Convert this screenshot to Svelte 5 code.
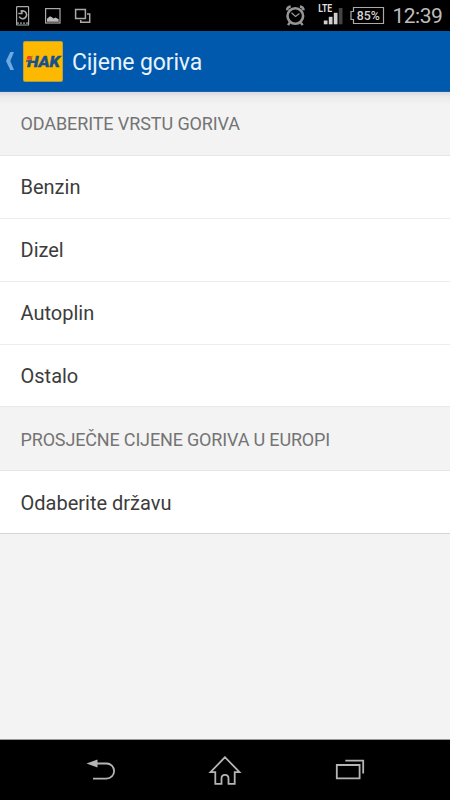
<script>
  const fuels = ['Benzin', 'Dizel', 'Autoplin', 'Ostalo'];
</script>

<div class="screen">
  <div class="status">
    <svg class="notifications" width="100" height="31" viewBox="0 0 100 31" fill="none" stroke="#aaa" stroke-width="1.2">
      <rect x="16.6" y="6.6" width="12" height="18.4" rx="0.6" />
      <path d="M17 23.2h11" stroke="#6c7880" stroke-width="1.8" stroke-dasharray="2 1" />
      <path d="M20.600 11.500A3.900 3.900 0 1 1 19.200 16.500" stroke-width="1.600" />
      <path d="M18.300 13.600h3.600V10" stroke-width="1.500" />
      <rect x="45.6" y="8.6" width="14.4" height="14.4" />
      <path d="M47 21.800v-3l3-2.500 2 1 1.500 1.200 2-1 3.200 1.800v2.500z" fill="#bbb" stroke="none" />
      <path d="M75.600 9.600h9.800v9h-9.800z" stroke-width="1.500" />
      <path d="M87 14.100h2.700v8.200h-9v-2.300" stroke-width="1.500" />
    </svg>
    <svg class="system" width="120" height="31" viewBox="280 0 120 31">
      <g fill="none" stroke="#969696">
        <circle cx="295.3" cy="16" r="7.800" stroke-width="2.600" />
        <path d="M287 10.300q.2-3.400 3.700-3.800M303.600 10.300q-.2-3.400-3.700-3.800M289.700 22.600l-1.700 2.500M300.900 22.600l1.700 2.500" stroke-width="2.400" />
        <path d="M291.500 12.700l4 3.800 4-3" stroke-width="1.300" />
      </g>
      <g fill="#d0d0d0">
        <rect x="323.800" y="20.500" width="3.700" height="3.800" />
        <rect x="328.800" y="16.800" width="3.700" height="7.500" />
        <rect x="333.800" y="12.800" width="3.700" height="11.500" />
        <rect x="338.800" y="8" width="3.700" height="16.300" fill="#444" />
      </g>
      <text x="318.2" y="12" class="lte" textLength="14" lengthAdjust="spacingAndGlyphs">LTE</text>
      <path d="M353.500 7.500h30v16h-30v-4h-2.500v-8h2.500z" fill="none" stroke="#aaa" stroke-width="1.200" />
      <text x="356.800" y="20.300" class="percent" textLength="23" lengthAdjust="spacingAndGlyphs">85%</text>
    </svg>
    <span class="clock">12:39</span>
  </div>

  <header>
    <svg class="chevron" width="10" height="20" viewBox="0 0 10 20"><path d="M5.300 1h3.700L5.300 10 9 19H5.300L1 10z" fill="#6ea9df" /></svg>
    <svg class="logo" width="40" height="41" viewBox="0 0 40 41">
      <rect width="40" height="41" rx="2" fill="#a99a45" />
      <rect x=".7" y=".7" width="38.600" height="39.200" rx="1.500" fill="#fdb900" />
      <text x="4" y="25.600" textLength="33" lengthAdjust="spacingAndGlyphs">HAK</text>
      <path d="M3 13.500h6.400l-1.500 5.300H2z" fill="#fdb900" />
      <path d="M4.600 15h4.200l-1.100 3.400H3.400z" fill="#ef3e24" />
      <path d="M3.300 19.200H9l-.4 1.500H2.700z" fill="#3d5870" />
      <path d="M1.700 21.700h3l-1.300 4.500H1z" fill="#fdb900" />
    </svg>
    <h1>Cijene goriva</h1>
  </header>

  <main>
    <h2 class="first"><span>ODABERITE VRSTU GORIVA</span></h2>
    <ul>
      {#each fuels as fuel}
        <li>{fuel}</li>
      {/each}
    </ul>
    <h2 class="europe"><span>PROSJEČNE CIJENE GORIVA U EUROPI</span></h2>
    <ul class="last"><li>Odaberite državu</li></ul>
  </main>

  <nav>
    <svg width="450" height="60" viewBox="0 0 450 60" fill="none" stroke="#b5b5b5" stroke-width="1.800">
      <path d="M96 23.500h10.500a7.600 7.600 0 0 1 0 15.200H93" />
      <path d="M86.500 23.500l11-4v8z" fill="#b5b5b5" stroke="none" />
      <path d="M225 17.200l-14.500 15h4.800v11.600h6.200v-5.300q0-3.600 3.500-3.600t3.500 3.600v5.300h6.200V32.200h4.800z" />
      <path d="M336.800 25h22.800v13.400h-22.800zM345.300 20.600h17.900v13" />
    </svg>
  </nav>
</div>

<style>
  :global(body) { background: #000; }
  .screen {
    width: 450px;
    height: 800px;
    display: flex;
    flex-direction: column;
    overflow: hidden;
    background: #f3f3f3;
    font-family: Roboto, sans-serif;
  }
  .status {
    height: 31px;
    flex: none;
    display: flex;
    background: #000;
  }
  .system { margin-left: 180px; }
  .lte { font: 700 10px Roboto, sans-serif; fill: #ddd; }
  .percent { font: 500 12.500px Roboto, sans-serif; fill: #d5d5d5; }
  .clock {
    margin-left: -7.500px;
    color: #bdbdbd;
    font-size: 21px;
    letter-spacing: -0.5px;
    line-height: 33px;
  }
  header {
    height: 61px;
    flex: none;
    box-sizing: border-box;
    display: flex;
    align-items: center;
    padding-left: 5px;
    background: #0059ad;
    border-bottom: 1px solid #1c62a6;
  }
  .chevron { flex: none; }
  .logo { margin-left: 8px; flex: none; }
  .logo text {
    font: italic 900 14.500px Roboto, sans-serif;
    fill: #17508c;
    stroke: #17508c;
    stroke-width: .3px;
  }
  h1 {
    margin: 3px 0 0 9px;
    color: #e8f2fb;
    font-size: 23px;
    letter-spacing: -0.13px;
    font-weight: 400;
    line-height: 30px;
  }
  main { flex: 1; }
  h2 {
    margin: 0;
    height: 64px;
    box-sizing: border-box;
    display: flex;
    align-items: center;
    padding-left: 20.500px;
    color: #747474;
    font-size: 18px;
    letter-spacing: -0.1px;
    font-weight: 400;
    background: #f3f3f3;
    border-bottom: 1px solid #e6e6e6;
  }
  .first {
    background: linear-gradient(#d9dadd, #ebebec 5px, #f3f3f3 13px);
  }
  .europe {
    height: 65px;
    padding-top: 1px;
    letter-spacing: -0.16px;
    border-top: 1px solid #e9e9e9;
  }
  ul {
    list-style: none;
    margin: 0;
    padding: 0;
    background: #fff;
  }
  li {
    height: 63px;
    box-sizing: border-box;
    display: flex;
    align-items: center;
    padding: 0 0 0 20.500px;
    color: #3c3c3c;
    font-size: 20px;
    border-bottom: 1px solid #ededed;
  }
  li:last-child { height: 61px; border-bottom: 0; }
  .last li:last-child { height: 63px; padding-top: 2px; border-bottom: 1px solid #d6d6d6; }
  nav {
    height: 61px;
    flex: none;
    box-sizing: border-box;
    background: #000;
    border-top: 1px solid #999;
  }
  nav svg { display: block; }
</style>
